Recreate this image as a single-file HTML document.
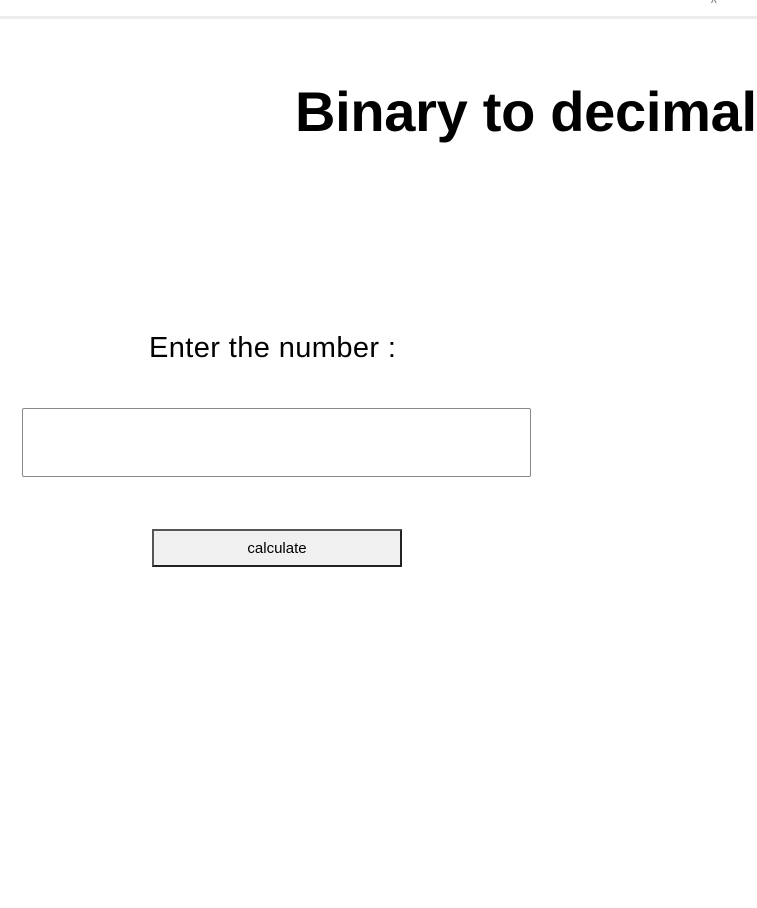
<!DOCTYPE html>
<html><head><style>
body{margin:0;width:757px;height:908px;background:#fff;overflow:hidden;position:relative;font-family:"Liberation Sans",sans-serif}
.bar{position:absolute;left:0;top:0;width:757px;height:16px;background:#fff;border-bottom:3px solid #ececec}
.ch{position:absolute;left:711px;top:-4px;font-size:12px;color:#666}
h1{position:absolute;left:295px;top:78px;margin:0;font-size:56px;font-weight:bold;white-space:nowrap;line-height:1.2;letter-spacing:-0.3px}
.lab{position:absolute;left:149px;top:332px;font-size:29px;white-space:nowrap;letter-spacing:0.4px}
.in{position:absolute;left:22px;top:408px;width:507px;height:67px;border:1px solid #888;border-radius:2px}
.btn{position:absolute;left:152px;top:529px;width:246px;height:34px;border:2px solid #222;border-left-color:#555;border-top-color:#555;background:#f0f0f0;font-size:15px;text-align:center;line-height:36px}
</style></head><body>
<div class="bar"></div><div class="ch">^</div>
<h1>Binary to decimal</h1>
<div class="lab">Enter the number :</div>
<div class="in"></div>
<div class="btn">calculate</div>
</body></html>
